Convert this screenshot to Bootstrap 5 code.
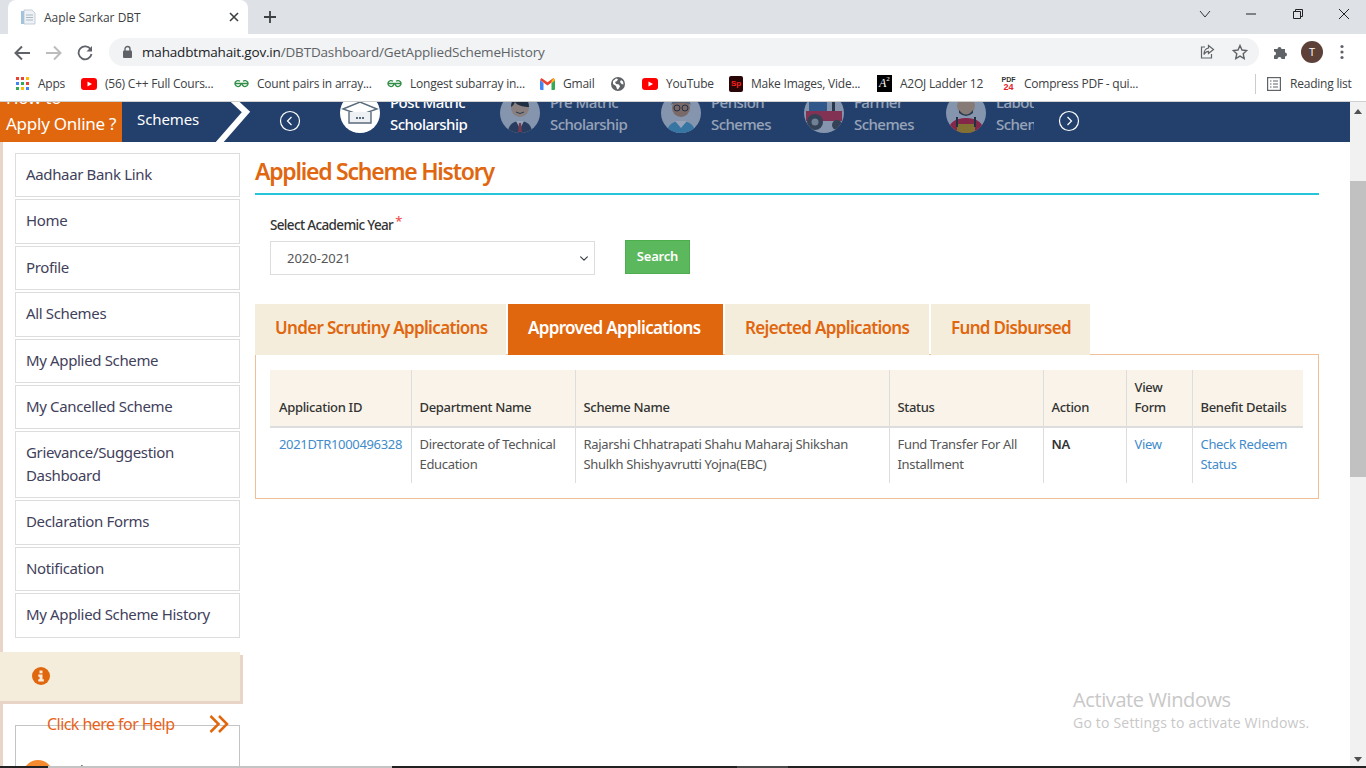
<!doctype html>
<html lang="en">
<head>
  <meta charset="utf-8">
  <meta name="viewport" content="width=device-width, initial-scale=1">
  <title>Aaple Sarkar DBT</title>
  <link href="https://cdn.jsdelivr.net/npm/bootstrap@5.3.0/dist/css/bootstrap.min.css" rel="stylesheet">
  <style>
    html, body { height: 100%; overflow: hidden; }
    body { font-family: "Noto Sans", "Open Sans", sans-serif; background: #fff; }
    .shell { height: 768px; width: 1366px; }

    /* browser chrome */
    .tabstrip { height: 34px; background: #dee1e6; padding-left: 8px; flex: none; }
    .tabbox { width: 240px; height: 34px; background: #fff; border-radius: 8px 8px 0 0; padding: 0 9px 0 12px; font: 12px "Open Sans", sans-serif; color: #3c4043; }
    .tabplus { margin-left: 15px; }
    .winbtns { margin-left: auto; margin-bottom: 6px; width: 167px; }
    .toolbar { height: 33px; background: #fff; flex: none; padding: 2px 0 0 13px; }
    .toolbtn { width: 32px; }
    .omni { width: 1150px; height: 28px; background: #f1f3f4; border-radius: 14px; padding: 0 11px 0 13px; font: 13.5px "Open Sans", sans-serif; color: #5f6368; letter-spacing: -.17px; }
    .omni b { font-weight: 400; color: #202124; }
    .omni svg.lockic { margin-right: 9px; }
    .star-ic { margin-left: 17px; }
    .tool-right { margin-left: 14px; gap: 12px; }
    .avatar-t { width: 22px; height: 22px; border-radius: 50%; background: #5d4037; color: #fff; font: 11px "Open Sans", sans-serif; }
    .menu-dots { margin-left: 5px; }
    .bookmarks { height: 35px; background: #fff; border-bottom: 1px solid #d0d0d0; flex: none; padding: 0 0 1px 15px; font: 12px "Open Sans", sans-serif; color: #3c4043; letter-spacing: -.22px; }
    .bm-grid { display: grid; grid-template-columns: 66px 153px 153px 153px 71px 31px 87px 148px 124px 240px; }
    .bm-item { gap: 8px; white-space: nowrap; }
    .bm-read { border-left: 1px solid #ccc; padding-left: 11px; height: 20px; gap: 9px; margin-left: 14px; white-space: nowrap; }
    .a2-logo { width: 15px; height: 17px; background: #000; color: #fff; font: italic 12px/17px "Liberation Serif", serif; position: relative; padding-left: 2px; letter-spacing: 0; }
    .a2-logo sup { font-size: 7px; top: -6px; position: relative; vertical-align: baseline; font-style: normal; }
    .pdf-logo { width: 15px; font: bold 7px/7px "Liberation Sans", sans-serif; color: #333; text-align: center; letter-spacing: 0; }
    .pdf-logo span { display: block; color: #e8202a; font-size: 9px; line-height: 8px; }
    .sp-logo { width: 14px; height: 16px; background: #2a0505; border-radius: 2px; color: #ff2020; font: bold 8px/16px "Liberation Sans", sans-serif; text-align: center; letter-spacing: 0; }

    /* page */
    .viewport { min-height: 0; }
    .pagebox { min-width: 0; overflow: hidden; }
    .scrolltrack { width: 16px; flex: none; background: #f1f1f1; padding-top: 79px; }
    .scrollthumb { height: 296px; background: #c1c1c1; }
    .arrow-up, .arrow-down { position: absolute; left: 4px; width: 0; height: 0; border-left: 4px solid transparent; border-right: 4px solid transparent; }
    .arrow-up { top: 7px; border-bottom: 5px solid #505050; }
    .arrow-down { bottom: 4px; border-top: 5px solid #505050; }

    .topband { height: 40px; background: #23406c; color: #fff; overflow: hidden; flex: none; }
    .how-box { width: 122px; height: 40px; background: #e1670f; font-size: 17px; line-height: 26px; padding-left: 6px; letter-spacing: -.25px; white-space: nowrap; }
    .how-box div:first-child { margin-top: -17px; }
    .schemes-tag { width: 97px; padding-left: 15px; font-size: 15px; line-height: 34px; height: 40px; letter-spacing: -.1px; }
    .chevron-slash { width: 40px; margin-left: -4px; flex: none; }
    .car-arrow { margin-left: 24px; margin-top: -2px; flex: none; }
    .car-list { display: grid; grid-template-columns: 160px 161px 143px 142px 88px; width: 694px; margin-left: 39px; overflow: hidden; height: 40px; flex: none; }
    .car-item { gap: 10px; height: 40px; }
    .car-item svg { margin-top: -9px; flex: none; }
    .car-text { font-size: 15px; line-height: 22px; margin-top: -11px; white-space: nowrap; letter-spacing: -.55px; font-weight: 500; }
    .car-dim { opacity: .52; }
    .car-next { margin-left: 24px; margin-top: -2px; flex: none; }

    .sidecol { width: 255px; flex: none; background: linear-gradient(#e8d5c8, #e8d5c8) left top / 3px 100% no-repeat; height: 624px; overflow: hidden; padding-top: 11px; }
    .sidemenu { margin: 0 0 0 15px; width: 225px; gap: 2px; }
    .sidelink { display: block; border: 1px solid #ddd; padding: 9px 10px; font-size: 15px; line-height: 23px; color: #3f415b; text-decoration: none; letter-spacing: -.35px; height: 44.4px; }
    .sidelink.twoline { height: 67px; }
    .infoband { margin: 14px 0 0; width: 240px; height: 49px; background: #f5eddc; box-shadow: 3px 3px 0 #e8d5c8; padding-left: 32px; }
    .helpbox { margin: 24px 0 0 15px; width: 225px; height: 80px; border: 1px solid #c4c4c4; padding: 35px 0 0 7px; }
    .helphead { margin: -50px 0 0 24px; width: 182px; color: #e8621a; font-size: 16px; line-height: 26px; letter-spacing: -.55px; white-space: nowrap; }
    .helpline { gap: 11px; margin-top: 23px; font-size: 14px; color: #333; }
    .helpdot { width: 30px; height: 30px; background: #f58a2e; border-radius: 50%; flex: none; }

    .maincol { padding-top: 11px; width: 1064px; flex: none; }
    .pagehead { color: #e0670f; font-size: 23px; font-weight: 600; line-height: 36px; padding-bottom: 4px; border-bottom: 2px solid #27c5dc; margin: 0; letter-spacing: -1.25px; }
    .yearform { padding: 20px 0 0 15px; height: 109px; }
    .yearlabel { font-size: 13.5px; font-weight: 500; color: #333; margin: 0 0 6px; line-height: 20px; letter-spacing: -.65px; }
    .yearlabel i { color: #f05050; font-style: normal; font-size: 13px; vertical-align: top; line-height: 12px; margin-left: 2px; }
    .yearselect { width: 325px; height: 34px; border: 1px solid #ddd; border-radius: 0; font-size: 13px; color: #555; padding: 1px 30px 0 16px; background-position: right 4px center; background-size: 12px 9px; }
    .searchbtn { width: 65px; height: 34px; margin: -1px 0 0 30px; padding: 0; background: #5cb85c; border: 1px solid #4cae4c; border-radius: 0; font-size: 13px; font-weight: 600; letter-spacing: -.2px; }
    .applytabs { display: grid; grid-template-columns: 251px 215px 204px 159px; gap: 2px; border: 0; height: 51px; margin: 0; }
    .applytab { height: 51px; padding: 0 0 0 20px; border: 0; border-radius: 0; background: #f5eddc; color: #e0670f; font-size: 17px; font-weight: 600; line-height: 47px; letter-spacing: -.67px; white-space: nowrap; text-decoration: none; display: block; }
    .applytab.is-on { background: #e1670f; color: #fff; }
    .tabpanelbox { height: 145px; margin-top: -1px; border: 1px solid #f0bf97; padding: 15px 15px 0 14px; }
    .histtable { table-layout: fixed; width: 1033px; margin: 0; font-size: 13px; color: #555; line-height: 20px; letter-spacing: -.32px; border-collapse: collapse; }
    .histtable th { background: #f9f3e9; font-weight: 500; color: #333; padding: 7px 8px 9px; vertical-align: bottom; border: 0; border-right: 1px solid #ddd; border-bottom: 2px solid #ddd; }
    .histtable td { padding: 6px 8px 9px; vertical-align: top; border: 0; border-right: 1px solid #ddd; color: #555; background: transparent; }
    .histtable th:first-child, .histtable td:first-child { padding-left: 9px; }
    .histtable th:last-child, .histtable td:last-child { border-right: 0; }
    .histtable a { color: #428bca; text-decoration: none; }
    .histtable .strong-cell { font-weight: 600; color: #333; }
    .c1 { width: 141px; } .c2 { width: 164px; } .c3 { width: 314px; } .c4 { width: 154px; } .c5 { width: 83px; } .c6 { width: 66px; } .c7 { width: 111px; }

    .activate { position: absolute; left: 1073px; top: 584px; color: #c8c8c8; font: 20px/28px "Open Sans", sans-serif; letter-spacing: -.4px; }
    .activate small { display: block; font-size: 14px; line-height: 17px; letter-spacing: .2px; }

    .taskstrip { height: 2px; flex: none; background: #222; }
    .taskstrip span { display: block; height: 2px; position: absolute; top: 0; }
    .strip-a { left: 48px; width: 344px; background: #c4c4c4; }
    .strip-b { left: 737px; width: 51px; background: #4a4a4a; }
  </style>
</head>
<body>
<div class="shell d-flex flex-column">

  <div class="tabstrip d-flex align-items-end">
    <div class="tabbox d-flex align-items-center">
      <svg width="16" height="16" viewBox="0 0 16 16" class="me-2"><path d="M1 2h3v13H1z" fill="#9fc3e0"/><path d="M4 1h8l3 3v11H4z" fill="#eef2f6" stroke="#b7c3cf" stroke-width=".8"/><path d="M6 6h7M6 8.5h7M6 11h7" stroke="#aab6c2"/></svg>
      <span>Aaple Sarkar DBT</span>
      <svg class="ms-auto" width="10" height="10" viewBox="0 0 10 10"><path d="M1 1l8 8M9 1L1 9" stroke="#3c4043" stroke-width="1.6"/></svg>
    </div>
    <svg class="tabplus align-self-center" width="14" height="14" viewBox="0 0 14 14"><path d="M7 1v12M1 7h12" stroke="#3c4043" stroke-width="1.8"/></svg>
    <div class="winbtns d-flex justify-content-between align-items-center align-self-center pe-3">
      <svg width="12" height="12" viewBox="0 0 12 12"><path d="M1 3l5 6 5-6" fill="none" stroke="#333" stroke-width="1"/></svg>
      <svg width="12" height="12" viewBox="0 0 12 12"><path d="M1 6h10" stroke="#222" stroke-width="1"/></svg>
      <svg width="12" height="12" viewBox="0 0 12 12"><path d="M1.500 3.500h7v7h-7zM3.500 3.500v-2h7v7h-2" fill="none" stroke="#222" stroke-width="1"/></svg>
      <svg width="12" height="12" viewBox="0 0 12 12"><path d="M1 1l10 10M11 1L1 11" stroke="#222" stroke-width="1"/></svg>
    </div>
  </div>

  <div class="toolbar d-flex align-items-center">
    <div class="toolbtn"><svg width="18" height="16" viewBox="0 0 18 16"><path d="M17 8H3M9 1.500L2.500 8 9 14.500" fill="none" stroke="#5f6368" stroke-width="2"/></svg></div>
    <div class="toolbtn"><svg width="18" height="16" viewBox="0 0 18 16"><path d="M1 8h14M9 1.500L15.500 8 9 14.500" fill="none" stroke="#babcbe" stroke-width="2"/></svg></div>
    <div class="toolbtn"><svg width="16" height="16" viewBox="0 0 16 16"><path d="M13.700 4.500A6.500 6.500 0 1 0 14.500 9" fill="none" stroke="#5f6368" stroke-width="1.800"/><path d="M15 1v5.500H9.500z" fill="#5f6368"/></svg></div>
    <div class="omni d-flex align-items-center">
      <svg class="lockic" width="11" height="13" viewBox="0 0 11 13"><path d="M3 6V4a2.500 2.500 0 0 1 5 0v2" fill="none" stroke="#5f6368" stroke-width="1.400"/><rect x="1" y="5.500" width="9" height="7.500" rx="1" fill="#5f6368"/></svg>
      <span><b>mahadbtmahait.gov.in</b>/DBTDashboard/GetAppliedSchemeHistory</span>
      <svg class="ms-auto" width="16" height="16" viewBox="0 0 16 16"><path d="M6 3H2.500v11h10v-4" fill="none" stroke="#5f6368" stroke-width="1.200"/><path d="M9.500 1.500L14.500 5.500 9.500 9.500V7.300C7.500 7.300 6 8.300 5 10.500 5 7 6.800 4.500 9.500 4z" fill="none" stroke="#5f6368" stroke-width="1.200"/></svg>
      <svg class="star-ic" width="16" height="16" viewBox="0 0 16 16"><path d="M8 1.500l2 4.500 4.800.5-3.600 3.200 1 4.800L8 12.100l-4.200 2.400 1-4.800L1.200 6.500 6 6z" fill="none" stroke="#5f6368" stroke-width="1.400"/></svg>
    </div>
    <div class="tool-right d-flex align-items-center">
      <svg width="16" height="16" viewBox="0 0 16 16"><path d="M1 5h3.500a2 2 0 1 1 4 0H12v3.500a2 2 0 1 1 0 4V15H8.500a2 2 0 1 0-4 0H1v-3.500a2 2 0 1 0 0-4z" fill="#5f6368"/></svg>
      <div class="avatar-t d-flex align-items-center justify-content-center">T</div>
      <svg class="menu-dots" width="4" height="16" viewBox="0 0 4 16"><circle cx="2" cy="2.500" r="1.600" fill="#5f6368"/><circle cx="2" cy="8" r="1.600" fill="#5f6368"/><circle cx="2" cy="13.500" r="1.600" fill="#5f6368"/></svg>
    </div>
  </div>

  <div class="bookmarks d-flex align-items-center">
    <div class="bm-grid align-items-center">
      <div class="bm-item d-flex align-items-center">
        <svg width="15" height="15" viewBox="0 0 15 15"><rect x="1" y="1" width="3" height="3" fill="#ea4335"/><rect x="6" y="1" width="3" height="3" fill="#ea4335"/><rect x="11" y="1" width="3" height="3" fill="#fbbc04"/><rect x="1" y="6" width="3" height="3" fill="#4285f4"/><rect x="6" y="6" width="3" height="3" fill="#34a853"/><rect x="11" y="6" width="3" height="3" fill="#ea4335"/><rect x="1" y="11" width="3" height="3" fill="#34a853"/><rect x="6" y="11" width="3" height="3" fill="#fbbc04"/><rect x="11" y="11" width="3" height="3" fill="#4285f4"/></svg>
        <span>Apps</span>
      </div>
      <div class="bm-item d-flex align-items-center">
        <svg width="16" height="12" viewBox="0 0 16 12"><rect width="16" height="12" rx="3" fill="#f00"/><path d="M6.500 3.500v5L11 6z" fill="#fff"/></svg>
        <span>(56) C++ Full Cours...</span>
      </div>
      <div class="bm-item d-flex align-items-center">
        <svg width="15" height="9" viewBox="0 0 15 9"><path d="M1 4.500h13M7 4.500A3 3 0 1 1 6 2.300M8 4.500a3 3 0 1 0 1-2.200" fill="none" stroke="#2f8d46" stroke-width="1.300"/></svg>
        <span>Count pairs in array...</span>
      </div>
      <div class="bm-item d-flex align-items-center">
        <svg width="15" height="9" viewBox="0 0 15 9"><path d="M1 4.500h13M7 4.500A3 3 0 1 1 6 2.300M8 4.500a3 3 0 1 0 1-2.200" fill="none" stroke="#2f8d46" stroke-width="1.300"/></svg>
        <span>Longest subarray in...</span>
      </div>
      <div class="bm-item d-flex align-items-center">
        <svg width="15" height="12" viewBox="0 0 15 12"><path d="M0 2v9a1 1 0 0 0 1 1h2.500V5z" fill="#4285f4"/><path d="M15 2v9a1 1 0 0 1-1 1h-2.500V5z" fill="#34a853"/><path d="M0 2l7.500 5.500L15 2l-1.500-2-6 4.300L1.500 0z" fill="#ea4335"/><path d="M11.500 2.900l2-2.900L15 2l-3.500 3z" fill="#fbbc04"/></svg>
        <span>Gmail</span>
      </div>
      <div class="bm-item d-flex align-items-center">
        <svg width="14" height="14" viewBox="0 0 14 14"><circle cx="7" cy="7" r="7" fill="#5f6368"/><path d="M2 4l3-2.500 2 .5-1 2-2 1 1 2 3 .5 1 2-2 3-1-.5-1-3-3-2zM10 3l2 1.500.5 3-2-.5-1.500-2z" fill="#fff"/></svg>
      </div>
      <div class="bm-item d-flex align-items-center">
        <svg width="16" height="12" viewBox="0 0 16 12"><rect width="16" height="12" rx="3" fill="#f00"/><path d="M6.500 3.500v5L11 6z" fill="#fff"/></svg>
        <span>YouTube</span>
      </div>
      <div class="bm-item d-flex align-items-center">
        <div class="sp-logo">Sp</div>
        <span>Make Images, Vide...</span>
      </div>
      <div class="bm-item d-flex align-items-center">
        <div class="a2-logo">A<sup>2</sup></div>
        <span>A2OJ Ladder 12</span>
      </div>
      <div class="bm-item d-flex align-items-center">
        <div class="pdf-logo">PDF<span>24</span></div>
        <span>Compress PDF - qui...</span>
      </div>
    </div>
    <div class="bm-read d-flex align-items-center">
      <svg width="14" height="14" viewBox="0 0 14 14"><rect x=".6" y=".6" width="12.800" height="12.800" fill="none" stroke="#5f6368" stroke-width="1.200"/><path d="M3 4h1.500M3 7h1.500M3 10h1.500M6 4h5M6 7h5M6 10h5" stroke="#5f6368" stroke-width="1.200"/></svg>
      <span>Reading list</span>
    </div>
  </div>

  <div class="viewport d-flex flex-grow-1 position-relative">
    <div class="pagebox flex-grow-1">
      <div class="topband d-flex">
        <div class="how-box"><div>How to</div><div>Apply Online ?</div></div>
        <div class="schemes-tag">Schemes</div>
        <svg class="chevron-slash" width="40" height="40" viewBox="0 0 40 40"><path d="M17-3L31 10 3 42" fill="none" stroke="#fff" stroke-width="6"/></svg>
        <svg class="car-arrow align-self-center" width="22" height="22" viewBox="0 0 22 22"><circle cx="11" cy="11" r="9.500" fill="none" stroke="#fff" stroke-width="1.200"/><path d="M12.500 7L8.500 11l4 4" fill="none" stroke="#fff" stroke-width="1.200"/></svg>
        <div class="car-list">
          <div class="car-item d-flex">
            <svg width="40" height="40" viewBox="0 0 40 40"><circle cx="20" cy="20" r="20" fill="#fff"/><path d="M3 16L20 9l17 7-17 6z" fill="none" stroke="#5a6b7b" stroke-width="1.400"/><path d="M9 19v11h22V19" fill="#eef1f3" stroke="#5a6b7b" stroke-width="1.400"/><path d="M16 25h8" stroke="#5a6b7b" stroke-width="2" stroke-dasharray="2 1"/></svg>
            <div class="car-text">Post Matric<br>Scholarship</div>
          </div>
          <div class="car-item d-flex car-dim">
            <svg width="40" height="40" viewBox="0 0 40 40"><defs><clipPath id="cp1"><circle cx="20" cy="20" r="20"/></clipPath></defs><g clip-path="url(#cp1)"><rect width="40" height="40" fill="#dfe3ea"/><path d="M8 40c0-8 5-12 12-12s12 4 12 12z" fill="#2b3a55"/><path d="M16 28l4 8 4-8z" fill="#fff"/><path d="M19 30h2l1 9h-4z" fill="#c03535"/><circle cx="20" cy="15" r="9" fill="#e6b98f"/><path d="M11 14c0-7 4-10 9-10s9 3 9 10c-4 0-12-1-14-5-1 2-2 4-4 5z" fill="#1e1e1e"/><path d="M16 19q4 3 8 0" fill="none" stroke="#333"/></g></svg>
            <div class="car-text">Pre Matric<br>Scholarship</div>
          </div>
          <div class="car-item d-flex car-dim">
            <svg width="40" height="40" viewBox="0 0 40 40"><defs><clipPath id="cp2"><circle cx="20" cy="20" r="20"/></clipPath></defs><g clip-path="url(#cp2)"><rect width="40" height="40" fill="#dfe3ea"/><path d="M6 40c0-8 6-12 14-12s14 4 14 12z" fill="#4aa6d6"/><path d="M14 28l6 7 6-7z" fill="#fff"/><circle cx="20" cy="15" r="9" fill="#c98f63"/><path d="M10 12c2-6 6-8 10-8s8 2 10 8c-3-3-17-3-20 0z" fill="#7d7d7d"/><circle cx="16" cy="15" r="3" fill="none" stroke="#222"/><circle cx="24" cy="15" r="3" fill="none" stroke="#222"/></g></svg>
            <div class="car-text">Pension<br>Schemes</div>
          </div>
          <div class="car-item d-flex car-dim">
            <svg width="40" height="40" viewBox="0 0 40 40"><defs><clipPath id="cp3"><circle cx="20" cy="20" r="20"/></clipPath></defs><g clip-path="url(#cp3)"><rect width="40" height="40" fill="#dfe3ea"/><path d="M5 6h18v12H5z" fill="#3c6ea6"/><path d="M2 18h36v10H2z" fill="#d9283f"/><path d="M28 8h3v10h-3z" fill="#333"/><circle cx="11" cy="29" r="8" fill="#444"/><circle cx="11" cy="29" r="3.500" fill="#bbb"/><circle cx="33" cy="32" r="5" fill="#444"/></g></svg>
            <div class="car-text">Farmer<br>Schemes</div>
          </div>
          <div class="car-item d-flex car-dim">
            <svg width="40" height="40" viewBox="0 0 40 40"><defs><clipPath id="cp4"><circle cx="20" cy="20" r="20"/></clipPath></defs><g clip-path="url(#cp4)"><rect width="40" height="40" fill="#dfe3ea"/><path d="M2 40c0-10 7-15 18-15s18 5 18 15z" fill="#e0112b"/><path d="M11 31h18v9H11z" fill="#d8a100"/><path d="M11 24v10M29 24v10" stroke="#222" stroke-width="2"/><circle cx="20" cy="13" r="9" fill="#e3b284"/><path d="M13 17q7 9 14 0v3q-7 6-14 0z" fill="#333"/></g></svg>
            <div class="car-text">Labour<br>Schemes</div>
          </div>
        </div>
        <svg class="car-next align-self-center" width="22" height="22" viewBox="0 0 22 22"><circle cx="11" cy="11" r="9.500" fill="none" stroke="#fff" stroke-width="1.200"/><path d="M9.500 7l4 4-4 4" fill="none" stroke="#fff" stroke-width="1.200"/></svg>
      </div>

      <div class="d-flex">
        <aside class="sidecol">
          <div class="sidemenu d-flex flex-column">
            <a class="sidelink" href="#">Aadhaar Bank Link</a>
            <a class="sidelink" href="#">Home</a>
            <a class="sidelink" href="#">Profile</a>
            <a class="sidelink" href="#">All Schemes</a>
            <a class="sidelink" href="#">My Applied Scheme</a>
            <a class="sidelink" href="#">My Cancelled Scheme</a>
            <a class="sidelink twoline" href="#">Grievance/Suggestion Dashboard</a>
            <a class="sidelink" href="#">Declaration Forms</a>
            <a class="sidelink" href="#">Notification</a>
            <a class="sidelink" href="#">My Applied Scheme History</a>
          </div>
          <div class="infoband d-flex align-items-center">
            <svg width="18" height="18" viewBox="0 0 18 18"><circle cx="9" cy="9" r="9" fill="#e1670f"/><rect x="7.500" y="3.500" width="3" height="2.800" fill="#f5eddc"/><path d="M6.300 7.500h4.200v4.700h1.300v2.300H6.300v-2.300h1.300V9.800H6.300z" fill="#f5eddc"/></svg>
          </div>
          <div class="helpbox">
            <div class="helphead d-flex align-items-center justify-content-between">
              <span>Click here for Help</span>
              <svg width="20" height="20" viewBox="0 0 20 20"><path d="M1.500 2l8 8-8 8M10 2l8 8-8 8" fill="none" stroke="#e1670f" stroke-width="2.500"/></svg>
            </div>
            <div class="helpline d-flex">
              <div class="helpdot"></div>
              <div>Grievance/</div>
            </div>
          </div>
        </aside>

        <main class="maincol">
          <h1 class="pagehead">Applied Scheme History</h1>
          <form class="yearform d-flex align-items-end" onsubmit="return false">
            <div class="align-self-start">
              <label class="yearlabel d-block">Select Academic Year<i>*</i></label>
              <div class="d-flex align-items-start">
                <select class="form-select yearselect">
                  <option>2020-2021</option>
                </select>
                <button class="btn btn-success searchbtn">Search</button>
              </div>
            </div>
          </form>
          <ul class="nav applytabs">
            <li class="nav-item"><a class="applytab" href="#">Under Scrutiny Applications</a></li>
            <li class="nav-item"><a class="applytab is-on" href="#">Approved Applications</a></li>
            <li class="nav-item"><a class="applytab" href="#">Rejected Applications</a></li>
            <li class="nav-item"><a class="applytab" href="#">Fund Disbursed</a></li>
          </ul>
          <div class="tabpanelbox">
            <table class="table histtable">
              <colgroup><col class="c1"><col class="c2"><col class="c3"><col class="c4"><col class="c5"><col class="c6"><col class="c7"></colgroup>
              <thead>
                <tr>
                  <th>Application ID</th>
                  <th>Department Name</th>
                  <th>Scheme Name</th>
                  <th>Status</th>
                  <th>Action</th>
                  <th>View Form</th>
                  <th>Benefit Details</th>
                </tr>
              </thead>
              <tbody>
                <tr>
                  <td><a href="#">2021DTR1000496328</a></td>
                  <td>Directorate of Technical Education</td>
                  <td>Rajarshi Chhatrapati Shahu Maharaj Shikshan Shulkh Shishyavrutti Yojna(EBC)</td>
                  <td>Fund Transfer For All Installment</td>
                  <td class="strong-cell">NA</td>
                  <td><a href="#">View</a></td>
                  <td><a href="#">Check Redeem Status</a></td>
                </tr>
              </tbody>
            </table>
          </div>
        </main>
      </div>
    </div>

    <div class="scrolltrack position-relative">
      <span class="arrow-up"></span>
      <div class="scrollthumb"></div>
      <span class="arrow-down"></span>
    </div>

    <div class="activate">Activate Windows<small>Go to Settings to activate Windows.</small></div>
  </div>

  <div class="taskstrip position-relative"><span class="strip-a"></span><span class="strip-b"></span></div>
</div>
<script src="https://cdn.jsdelivr.net/npm/bootstrap@5.3.0/dist/js/bootstrap.bundle.min.js"></script>
</body>
</html>
